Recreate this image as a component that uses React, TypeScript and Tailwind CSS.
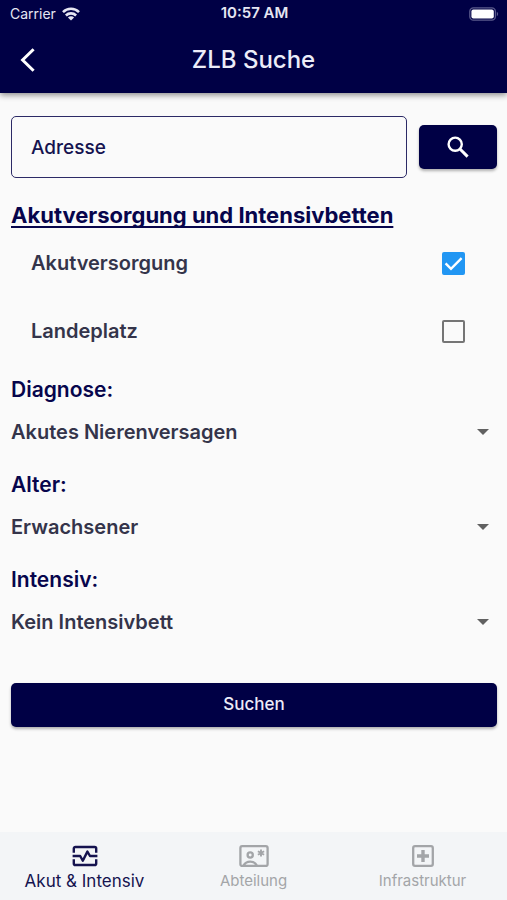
import { useState } from "react";
import clsx from "clsx";

const tabs = [
  { id: "akut", label: "Akut & Intensiv", icon: PulseIcon },
  { id: "abteilung", label: "Abteilung", icon: DepartmentIcon },
  { id: "infrastruktur", label: "Infrastruktur", icon: HospitalIcon },
];

function WifiIcon() {
  return (
    <svg viewBox="0 0 18 14" className="w-[18px] h-[14px]" aria-hidden="true">
      <g fill="none" stroke="currentColor" strokeWidth="2.6">
        <path d="M1 5.1a11.4 11.4 0 0 1 16 0" />
        <path d="M3.9 8.5a7.3 7.3 0 0 1 10.2 0" />
      </g>
      <path d="M9 13.6 5.9 10.6a4.4 4.4 0 0 1 6.2 0z" fill="currentColor" />
    </svg>
  );
}

function BatteryIcon() {
  return (
    <svg viewBox="0 0 30 14" className="w-[30px] h-[14px]" aria-hidden="true">
      <rect x="0.8" y="0.8" width="25.6" height="12.4" rx="3.6" fill="none" stroke="#5a5a8c" strokeWidth="1.3" />
      <rect x="2.4" y="2.4" width="22.4" height="9.2" rx="2" fill="#fff" />
      <path d="M27.8 4.8c1.8.8 1.8 3.6 0 4.4z" fill="#5a5a8c" />
    </svg>
  );
}

function PulseIcon() {
  return (
    <svg viewBox="0 0 26 22" className="w-[26px] h-[22px]" fill="none" stroke="currentColor" strokeWidth="2.4" aria-hidden="true">
      <path d="M1.8 7.8V3.6a1.6 1.6 0 0 1 1.6-1.6h19.2a1.6 1.6 0 0 1 1.6 1.6v4.2" />
      <path d="M1.8 14.2v4.2a1.6 1.6 0 0 0 1.6 1.6h19.2a1.6 1.6 0 0 0 1.6-1.6v-4.2" />
      <path d="M.6 11h7.6l2.600 4.800 4.600-9.200 2.600 4.400h7.400" strokeLinejoin="round" />
    </svg>
  );
}

function DepartmentIcon() {
  return (
    <svg viewBox="0 0 30 22" className="w-[30px] h-[22px]" fill="none" stroke="currentColor" strokeWidth="2.3" aria-hidden="true">
      <rect x="1.4" y="1.2" width="27.2" height="19.8" rx="1.8" />
      <circle cx="11.2" cy="10" r="2.6" />
      <path d="M4.6 20.600c1.400-2.800 3.800-4 6.600-4s5.200 1.200 6.600 4" />
      <path d="M22 4.400v7.200M18.900 6.200l6.200 3.600M25.100 6.200l-6.200 3.600" strokeWidth="1.900" />
    </svg>
  );
}

function HospitalIcon() {
  return (
    <svg viewBox="0 0 22 22" className="w-[22px] h-[22px]" fill="none" stroke="currentColor" strokeWidth="2.300" aria-hidden="true">
      <rect x="1.200" y="1.200" width="19.600" height="19.600" rx="1.800" />
      <path d="M11 5v12M5 11h12" strokeWidth="3.400" />
    </svg>
  );
}

type CheckRowProps = {
  label: string;
  checked: boolean;
  onChange: (value: boolean) => void;
};

function CheckRow({ label, checked, onChange }: CheckRowProps) {
  return (
    <label className="flex h-[68px] items-center justify-between pl-5 pr-8 text-[20px] font-semibold text-[#34344a]">
      {label}
      <span className="relative flex">
        <input
          type="checkbox"
          checked={checked}
          onChange={(e) => onChange(e.target.checked)}
          className="size-[23px] appearance-none rounded-xs border-2 border-[#757575] checked:border-[#2196f3] checked:bg-[#2196f3]"
        />
        {checked && (
          <svg viewBox="0 0 23 23" className="pointer-events-none absolute inset-0" fill="none" stroke="#fff" strokeWidth="2.4" aria-hidden="true">
            <path d="M3.600 11.400 9 16.800 19.600 6.200" />
          </svg>
        )}
      </span>
    </label>
  );
}

type SelectFieldProps = {
  id: string;
  label: string;
  options: string[];
};

function SelectField({ id, label, options }: SelectFieldProps) {
  return (
    <div>
      <label htmlFor={id} className="block text-[21px] leading-7 font-semibold text-[#07054c]">
        {label}
      </label>
      <div className="relative">
        <select
          id={id}
          className="block h-14 w-full appearance-none bg-transparent pr-8 text-[20px] font-semibold text-[#34344a] outline-none"
        >
          {options.map((option) => (
            <option key={option}>{option}</option>
          ))}
        </select>
        <svg viewBox="0 0 12 6" className="pointer-events-none absolute right-2 top-[25px] h-[6px] w-[12px]" aria-hidden="true">
          <path d="M0 0h12L6 6z" fill="#616161" />
        </svg>
      </div>
    </div>
  );
}

export default function App() {
  const [akut, setAkut] = useState(true);
  const [landeplatz, setLandeplatz] = useState(false);
  const [activeTab, setActiveTab] = useState("akut");

  return (
    <div className="flex min-h-screen flex-col bg-[#fafafa] font-['Inter',sans-serif]">
      <header className="bg-[#000045] text-white shadow-[0_2px_6px_rgba(0,0,0,0.45)]">
        {/* Status bar */}
        <div className="grid h-[27px] grid-cols-3 items-center pl-2.5 pr-2 text-[14px] text-[#e6e6f2]">
          <div className="flex items-center gap-1.5">
            Carrier
            <WifiIcon />
          </div>
          <div className="text-center text-[15px] font-semibold">10:57 AM</div>
          <div className="flex justify-end">
            <BatteryIcon />
          </div>
        </div>

        {/* Title bar */}
        <div className="grid h-[66px] grid-cols-[56px_1fr_56px] items-center">
          <button type="button" aria-label="Zurück" className="flex h-full items-center pl-5">
            <svg viewBox="0 0 16 24" className="h-6 w-4" fill="none" stroke="currentColor" strokeWidth="3" aria-hidden="true">
              <path d="M13.600 1.200 2.600 12l11 10.800" />
            </svg>
          </button>
          <h1 className="text-center text-[24px] font-medium text-[#ececf8]">ZLB Suche</h1>
        </div>
      </header>

      <main className="flex-1 pl-[11px] pr-2.5 pt-[23px] pb-6">
        <form onSubmit={(e) => e.preventDefault()}>
          <div className="flex items-center gap-3">
            <input
              type="text"
              aria-label="Adresse"
              placeholder="Adresse"
              className="h-[62px] min-w-0 flex-1 rounded-[5px] border border-[#2c2a66] bg-transparent px-[19px] text-[19px] font-medium text-[#15134f] outline-none placeholder:text-[#15134f]"
            />
            <button
              type="submit"
              aria-label="Adresse suchen"
              className="flex h-11 w-[78px] items-center justify-center rounded-[5px] bg-[#000045] text-white shadow-[0_2px_3px_rgba(0,0,0,0.3)]"
            >
              <svg viewBox="0 0 22 22" className="size-[22px]" fill="none" stroke="currentColor" aria-hidden="true">
                <circle cx="8.200" cy="8.200" r="6.600" strokeWidth="2.400" />
                <path d="m13 13 7.600 7.600" strokeWidth="3" />
              </svg>
            </button>
          </div>

          <h2 className="mt-[23px] text-[22px] leading-7 font-bold text-[#07054c] underline decoration-2 underline-offset-3 [text-decoration-skip-ink:none]">
            Akutversorgung und Intensivbetten
          </h2>
          <CheckRow label="Akutversorgung" checked={akut} onChange={setAkut} />
          <CheckRow label="Landeplatz" checked={landeplatz} onChange={setLandeplatz} />

          <div className="mt-[11px] flex flex-col gap-[11px]">
            <SelectField id="diagnose" label="Diagnose:" options={["Akutes Nierenversagen"]} />
            <SelectField id="alter" label="Alter:" options={["Erwachsener"]} />
            <SelectField id="intensiv" label="Intensiv:" options={["Kein Intensivbett"]} />
          </div>

          <button
            type="submit"
            className="mt-[33px] h-11 w-full rounded-[5px] bg-[#000045] text-[17px] font-medium text-[#ececf8] shadow-[0_2px_3px_rgba(0,0,0,0.3)]"
          >
            Suchen
          </button>
        </form>
      </main>

      <nav className="grid h-[68px] grid-cols-3 bg-[#f3f5f7]">
        {tabs.map(({ id, label, icon: Icon }) => (
          <button
            key={id}
            type="button"
            onClick={() => setActiveTab(id)}
            className={clsx(
              "flex flex-col items-center gap-1 pt-[13px] leading-5",
              activeTab === id ? "text-[17px] text-[#15134f]" : "text-[15px] text-[#a3a5a8]"
            )}
          >
            <Icon />
            {label}
          </button>
        ))}
      </nav>
    </div>
  );
}
